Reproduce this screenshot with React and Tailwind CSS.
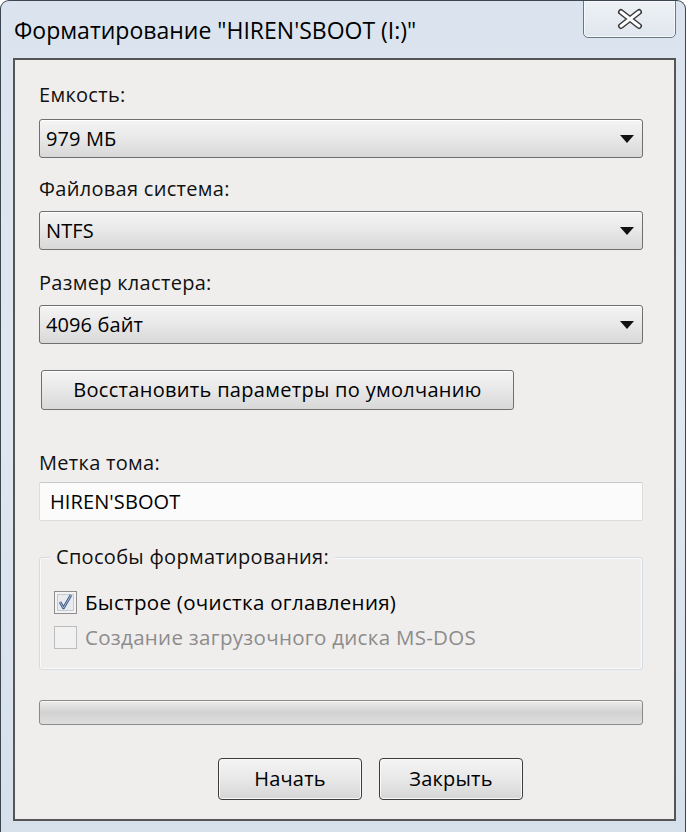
import React from "react";

const font = { fontFamily: '"Open Sans", "Noto Sans", "Liberation Sans", sans-serif' };

const Arrow = () => (
  <svg width="14" height="8" viewBox="0 0 14 8" className="shrink-0">
    <path d="M0 0 L14 0 L7 8 Z" fill="#111" />
  </svg>
);

const Select = ({ value }) => (
  <div className="h-[39px] w-full rounded-[3px] border border-[#6f6f6f] bg-gradient-to-b from-[#f4f4f4] via-[#e8e8e8] to-[#d8d8d8] flex items-center pl-[6px] pr-[8px] shadow-[inset_0_1px_0_#ffffff]">
    <span className="flex-1 text-[20px] text-black tracking-[0.1px]">{value}</span>
    <Arrow />
  </div>
);

const Label = ({ children, className = "" }) => (
  <div className={"h-[26px] leading-[26px] text-[20px] text-[#111] tracking-[0.3px] " + className}>{children}</div>
);

const CheckMark = () => (
  <svg width="23" height="23" viewBox="0 0 23 23">
    <rect x="0.5" y="0.5" width="22" height="22" fill="#f3f3f3" stroke="#8e8e8e" />
    <rect x="3.5" y="3.5" width="16" height="16" fill="#e9ecef" stroke="#c4c9cf" />
    <path d="M6 11 L9.5 17 L17 4" fill="none" stroke="#3d5a86" strokeWidth="2.6" strokeLinejoin="round" />
    <path d="M6 11 L9.5 17 L17 4" fill="none" stroke="#aebdd6" strokeWidth="1" />
  </svg>
);

const Empty = () => (
  <svg width="23" height="23" viewBox="0 0 23 23">
    <rect x="0.5" y="0.5" width="22" height="22" fill="#f1f1f1" stroke="#bdbdbd" />
  </svg>
);

export default function App() {
  return (
    <div
      className="w-[686px] h-[832px] bg-gradient-to-b from-[#dbe4ee] via-[#dfe7f0] to-[#d6e0eb] border-t border-l border-r border-[#3c4650] rounded-t-[9px] overflow-hidden flex flex-col"
      style={font}
    >
      {/* title bar */}
      <div className="h-[57px] flex items-start shrink-0">
        <div className="pl-[13px] pt-[15px] text-[23px] leading-[28px] text-black">
          Форматирование "HIREN'SBOOT (I:)"
        </div>
        <div className="ml-auto mr-[9px] w-[93px] h-[38px] -mt-px border border-[#6a7684] rounded-b-[5px] bg-gradient-to-b from-[#eef2f6] to-[#dfe6ed] flex items-center justify-center shadow-[inset_0_0_0_1px_#f6f9fb]">
          <svg width="28" height="22" viewBox="0 0 28 22">
            <path d="M5 4 L23 18 M23 4 L5 18" stroke="#3b3b3b" strokeWidth="6" strokeLinecap="round" />
            <path d="M5 4 L23 18 M23 4 L5 18" stroke="#ffffff" strokeWidth="3" strokeLinecap="round" />
          </svg>
        </div>
      </div>

      {/* panel */}
      <div className="ml-[12px] mr-[9px] h-[763px] shrink-0 border-2 border-[#555555] bg-[#efeeed] pl-[24px] pr-[31px] pt-[22px] flex flex-col">
        <Label>Емкость:</Label>
        <div className="mt-[11px]"><Select value="979 МБ" /></div>

        <Label className="mt-[18px]">Файловая система:</Label>
        <div className="mt-[9px]"><Select value="NTFS" /></div>

        <Label className="mt-[20px]">Размер кластера:</Label>
        <div className="mt-[9px]"><Select value="4096 байт" /></div>

        <div className="mt-[26px] ml-[2px] w-[473px] h-[40px] rounded-[3px] border border-[#6f6f6f] bg-gradient-to-b from-[#f4f4f4] via-[#e8e8e8] to-[#d8d8d8] flex items-center justify-center text-[20px] tracking-[0.3px] text-black shadow-[inset_0_1px_0_#ffffff]">
          Восстановить параметры по умолчанию
        </div>

        <Label className="mt-[40px]">Метка тома:</Label>
        <div className="mt-[6px] h-[39px] w-full rounded-[2px] border border-[#dcdcdc] border-t-[#c9c9c9] bg-[#fbfbfb] flex items-center pl-[10px] text-[20px] tracking-[0.1px] text-black">
          HIREN'SBOOT
        </div>

        {/* group box */}
        <div className="mt-[36px] relative h-[113px] w-full rounded-[3px] border border-[#d4dbe1] shadow-[inset_0_0_0_1px_#fafafa]">
          <div className="absolute left-[10px] -top-[14px] px-[6px] bg-[#efeeed] h-[26px] leading-[26px] text-[20px] tracking-[0.3px] text-[#111]">
            Способы форматирования:
          </div>
          <div className="pt-[33px] pl-[14px] flex flex-col gap-[12px]">
            <div className="flex items-center gap-[8px] h-[23px]">
              <CheckMark />
              <span className="text-[20.5px] tracking-[0.3px] text-black leading-[23px]">Быстрое (очистка оглавления)</span>
            </div>
            <div className="flex items-center gap-[8px] h-[23px]">
              <Empty />
              <span className="text-[20.5px] tracking-[0.3px] text-[#8c8c8c] leading-[23px]">Создание загрузочного диска MS-DOS</span>
            </div>
          </div>
        </div>

        {/* progress */}
        <div className="mt-[30px] h-[25px] w-full rounded-[3px] border border-[#8a8a8a] bg-gradient-to-b from-[#ececec] via-[#d2d2d2] to-[#dedede] shadow-[inset_0_1px_0_#f7f7f7]" />

        {/* buttons */}
        <div className="mt-[33px] flex gap-[17px] pl-[179px]">
          <div className="w-[144px] h-[42px] rounded-[4px] border border-[#3c3c3c] bg-gradient-to-b from-[#f4f4f4] via-[#e8e8e8] to-[#d6d6d6] flex items-center justify-center text-[20px] tracking-[0.2px] text-black shadow-[inset_0_0_0_1px_#f9f9f9]">
            Начать
          </div>
          <div className="w-[144px] h-[42px] rounded-[4px] border border-[#3c3c3c] bg-gradient-to-b from-[#f4f4f4] via-[#e8e8e8] to-[#d6d6d6] flex items-center justify-center text-[20px] tracking-[0.2px] text-black shadow-[inset_0_0_0_1px_#f9f9f9]">
            Закрыть
          </div>
        </div>
      </div>
    </div>
  );
}
